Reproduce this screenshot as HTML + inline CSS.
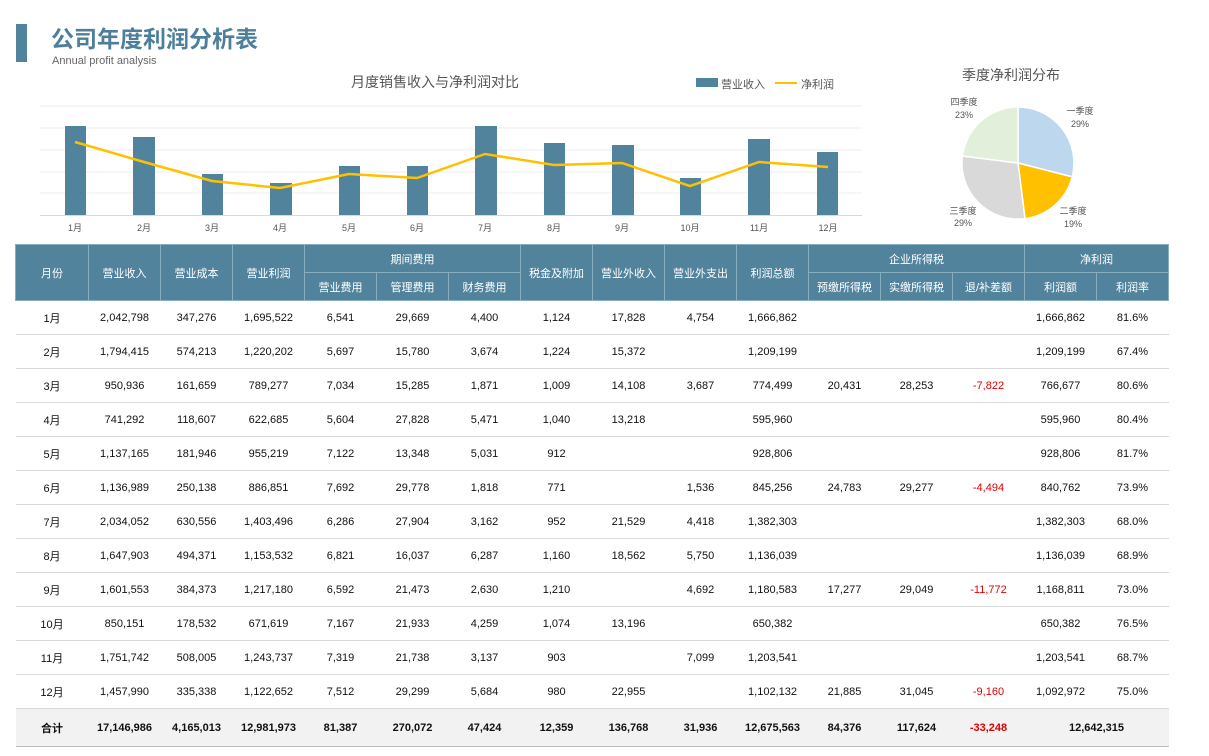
<!DOCTYPE html>
<html><head><meta charset="utf-8"><style>
body{margin:0;width:1209px;height:756px;background:#fff;position:relative;overflow:hidden;font-family:"Liberation Sans","Noto Sans CJK SC",sans-serif;}
.abs{position:absolute}
table{position:absolute;left:15px;top:244px;border-collapse:collapse;table-layout:fixed;font-size:11px;color:#111}
td,th{padding:0;text-align:center;white-space:nowrap}
th{background:#51849c;color:#fff;font-weight:normal;border:1px solid #86aebf;font-size:11px}
tbody td{height:33px;border-bottom:1px solid #d9d9d9}
tr.tot td{background:#f2f2f2;font-weight:bold;height:37px;border-top:1px solid #bbb;border-bottom:1px solid #bbb}
.r{color:#e00000}
</style></head><body>
<div class="abs" style="left:16px;top:24px;width:11px;height:38px;background:#51849c"></div>
<div class="abs" style="left:51px;top:20px;font-size:23px;font-weight:bold;color:#4e7f9a">公司年度利润分析表</div>
<div class="abs" style="left:52px;top:55px;font-size:11px;color:#666">Annual profit analysis</div>
<div class="abs" style="left:351px;top:72px;font-size:14px;color:#555">月度销售收入与净利润对比</div>
<div class="abs" style="left:696px;top:78px;width:22px;height:9px;background:#51849c"></div>
<div class="abs" style="left:721px;top:76px;font-size:11px;color:#555">营业收入</div>
<div class="abs" style="left:775px;top:82px;width:22px;height:2px;background:#ffc000"></div>
<div class="abs" style="left:801px;top:76px;font-size:11px;color:#555">净利润</div>
<div class="abs" style="left:962px;top:65px;font-size:14px;color:#555">季度净利润分布</div>
<svg class="abs" style="left:0;top:0" width="1209" height="240">
<g stroke="#eee" stroke-width="1">
<line x1="40" y1="106" x2="862" y2="106"/><line x1="40" y1="128" x2="862" y2="128"/><line x1="40" y1="150" x2="862" y2="150"/><line x1="40" y1="172" x2="862" y2="172"/><line x1="40" y1="193" x2="862" y2="193"/>
</g>
<line x1="40" y1="215.5" x2="862" y2="215.5" stroke="#d9d9d9"/>
<g fill="#51849c">
<rect x="65" y="126" width="21" height="89"/><rect x="133" y="137" width="22" height="78"/><rect x="202" y="174" width="21" height="41"/><rect x="270" y="183" width="22" height="32"/><rect x="339" y="166" width="21" height="49"/><rect x="407" y="166" width="21" height="49"/><rect x="475" y="126" width="22" height="89"/><rect x="544" y="143" width="21" height="72"/><rect x="612" y="145" width="22" height="70"/><rect x="680" y="178" width="21" height="37"/><rect x="748" y="139" width="22" height="76"/><rect x="817" y="152" width="21" height="63"/>
</g>
<polyline fill="none" stroke="#ffc000" stroke-width="2.5" points="75,142 144,162 212,181 280,188 349,174 417,178 485,154 554,165 622,163 690,186 759,162 828,167"/>
<g font-size="9" fill="#555" text-anchor="middle">
<text x="75" y="231">1月</text><text x="144" y="231">2月</text><text x="212" y="231">3月</text><text x="280" y="231">4月</text><text x="349" y="231">5月</text><text x="417" y="231">6月</text><text x="485" y="231">7月</text><text x="554" y="231">8月</text><text x="622" y="231">9月</text><text x="690" y="231">10月</text><text x="759" y="231">11月</text><text x="828" y="231">12月</text>
</g>
<g stroke="#fff" stroke-width="1.5">
<path d="M1018,163 L1018,107 A56,56 0 0 1 1072.2,176.9 Z" fill="#bdd7ee"/>
<path d="M1018,163 L1072.2,176.9 A56,56 0 0 1 1025,218.6 Z" fill="#ffc000"/>
<path d="M1018,163 L1025,218.6 A56,56 0 0 1 962.4,156 Z" fill="#d9d9d9"/>
<path d="M1018,163 L962.4,156 A56,56 0 0 1 1018,107 Z" fill="#e2efda"/>
</g>
<g font-size="9" fill="#555" text-anchor="middle">
<text x="964" y="105">四季度</text><text x="964" y="118">23%</text>
<text x="1080" y="114">一季度</text><text x="1080" y="127">29%</text>
<text x="963" y="214">三季度</text><text x="963" y="226">29%</text>
<text x="1073" y="214">二季度</text><text x="1073" y="227">19%</text>
</g>
</svg>
<table>
<colgroup><col style="width:73px"><col style="width:72px" span="15"></colgroup>
<thead>
<tr style="height:28px"><th rowspan="2">月份</th><th rowspan="2">营业收入</th><th rowspan="2">营业成本</th><th rowspan="2">营业利润</th><th colspan="3">期间费用</th><th rowspan="2">税金及附加</th><th rowspan="2">营业外收入</th><th rowspan="2">营业外支出</th><th rowspan="2">利润总额</th><th colspan="3">企业所得税</th><th colspan="2">净利润</th></tr>
<tr style="height:28px"><th>营业费用</th><th>管理费用</th><th>财务费用</th><th>预缴所得税</th><th>实缴所得税</th><th>退/补差额</th><th>利润额</th><th>利润率</th></tr>
</thead>
<tbody>
<tr><td>1月</td><td>2,042,798</td><td>347,276</td><td>1,695,522</td><td>6,541</td><td>29,669</td><td>4,400</td><td>1,124</td><td>17,828</td><td>4,754</td><td>1,666,862</td><td></td><td></td><td></td><td>1,666,862</td><td>81.6%</td></tr>
<tr><td>2月</td><td>1,794,415</td><td>574,213</td><td>1,220,202</td><td>5,697</td><td>15,780</td><td>3,674</td><td>1,224</td><td>15,372</td><td></td><td>1,209,199</td><td></td><td></td><td></td><td>1,209,199</td><td>67.4%</td></tr>
<tr><td>3月</td><td>950,936</td><td>161,659</td><td>789,277</td><td>7,034</td><td>15,285</td><td>1,871</td><td>1,009</td><td>14,108</td><td>3,687</td><td>774,499</td><td>20,431</td><td>28,253</td><td class="r">-7,822</td><td>766,677</td><td>80.6%</td></tr>
<tr><td>4月</td><td>741,292</td><td>118,607</td><td>622,685</td><td>5,604</td><td>27,828</td><td>5,471</td><td>1,040</td><td>13,218</td><td></td><td>595,960</td><td></td><td></td><td></td><td>595,960</td><td>80.4%</td></tr>
<tr><td>5月</td><td>1,137,165</td><td>181,946</td><td>955,219</td><td>7,122</td><td>13,348</td><td>5,031</td><td>912</td><td></td><td></td><td>928,806</td><td></td><td></td><td></td><td>928,806</td><td>81.7%</td></tr>
<tr><td>6月</td><td>1,136,989</td><td>250,138</td><td>886,851</td><td>7,692</td><td>29,778</td><td>1,818</td><td>771</td><td></td><td>1,536</td><td>845,256</td><td>24,783</td><td>29,277</td><td class="r">-4,494</td><td>840,762</td><td>73.9%</td></tr>
<tr><td>7月</td><td>2,034,052</td><td>630,556</td><td>1,403,496</td><td>6,286</td><td>27,904</td><td>3,162</td><td>952</td><td>21,529</td><td>4,418</td><td>1,382,303</td><td></td><td></td><td></td><td>1,382,303</td><td>68.0%</td></tr>
<tr><td>8月</td><td>1,647,903</td><td>494,371</td><td>1,153,532</td><td>6,821</td><td>16,037</td><td>6,287</td><td>1,160</td><td>18,562</td><td>5,750</td><td>1,136,039</td><td></td><td></td><td></td><td>1,136,039</td><td>68.9%</td></tr>
<tr><td>9月</td><td>1,601,553</td><td>384,373</td><td>1,217,180</td><td>6,592</td><td>21,473</td><td>2,630</td><td>1,210</td><td></td><td>4,692</td><td>1,180,583</td><td>17,277</td><td>29,049</td><td class="r">-11,772</td><td>1,168,811</td><td>73.0%</td></tr>
<tr><td>10月</td><td>850,151</td><td>178,532</td><td>671,619</td><td>7,167</td><td>21,933</td><td>4,259</td><td>1,074</td><td>13,196</td><td></td><td>650,382</td><td></td><td></td><td></td><td>650,382</td><td>76.5%</td></tr>
<tr><td>11月</td><td>1,751,742</td><td>508,005</td><td>1,243,737</td><td>7,319</td><td>21,738</td><td>3,137</td><td>903</td><td></td><td>7,099</td><td>1,203,541</td><td></td><td></td><td></td><td>1,203,541</td><td>68.7%</td></tr>
<tr><td>12月</td><td>1,457,990</td><td>335,338</td><td>1,122,652</td><td>7,512</td><td>29,299</td><td>5,684</td><td>980</td><td>22,955</td><td></td><td>1,102,132</td><td>21,885</td><td>31,045</td><td class="r">-9,160</td><td>1,092,972</td><td>75.0%</td></tr>
<tr class="tot"><td>合计</td><td>17,146,986</td><td>4,165,013</td><td>12,981,973</td><td>81,387</td><td>270,072</td><td>47,424</td><td>12,359</td><td>136,768</td><td>31,936</td><td>12,675,563</td><td>84,376</td><td>117,624</td><td class="r">-33,248</td><td colspan="2">12,642,315</td></tr>
</tbody>
</table>
</body></html>
